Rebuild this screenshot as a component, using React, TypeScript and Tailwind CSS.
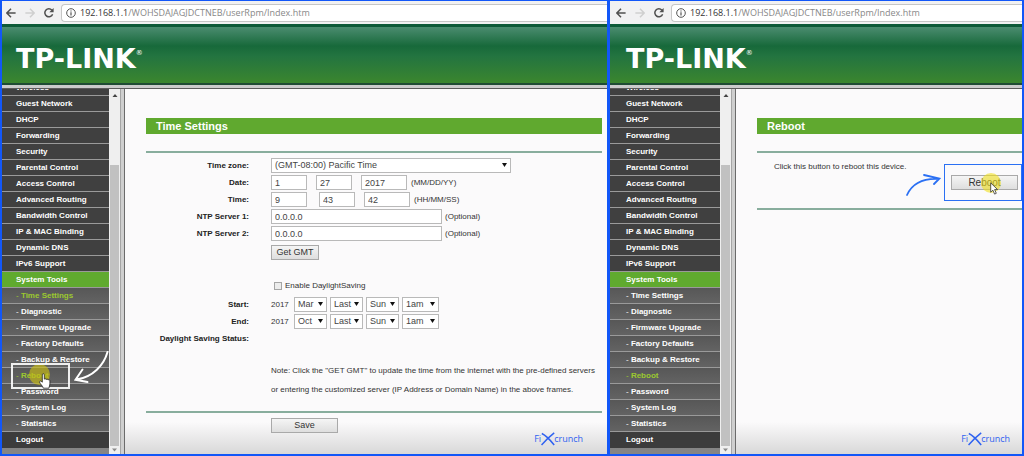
import type { ReactNode } from 'react';

const MENU = [
  'Guest Network',
  'DHCP',
  'Forwarding',
  'Security',
  'Parental Control',
  'Access Control',
  'Advanced Routing',
  'Bandwidth Control',
  'IP & MAC Binding',
  'Dynamic DNS',
  'IPv6 Support',
];

const SYSTEM_TOOLS = [
  'Time Settings',
  'Diagnostic',
  'Firmware Upgrade',
  'Factory Defaults',
  'Backup & Restore',
  'Reboot',
  'Password',
  'System Log',
  'Statistics',
];

function Toolbar({ className }: { className: string }) {
  return (
    <div className={`flex h-[23px] shrink-0 items-center bg-[#f1f1f2] ${className}`}>
      <button aria-label="Back" className="mr-[9px] text-[#505050]">
        <svg viewBox="0 0 10 10" className="block h-2.5 w-2.5" fill="none" stroke="currentColor" strokeWidth="1.5">
          <path d="M9.6 5H1.2M5 .8L.9 5 5 9.2" />
        </svg>
      </button>
      <button aria-label="Forward" className="mr-[9px] text-[#cfcfcf]">
        <svg viewBox="0 0 10 10" className="block h-2.5 w-2.5" fill="none" stroke="currentColor" strokeWidth="1.5">
          <path d="M.4 5h8.400M5 .8L9.100 5 5 9.200" />
        </svg>
      </button>
      <button aria-label="Reload" className="mr-[7px] text-[#505050]">
        <svg viewBox="0 0 10 10" className="block h-2.5 w-2.5" fill="none" stroke="currentColor" strokeWidth="1.5">
          <path d="M8.6 6.2A4 4 0 1 1 7.9 2.2" />
          <path d="M9.6 0v4.3H5.3z" fill="currentColor" stroke="none" />
        </svg>
      </button>
      <div className="flex h-[18px] min-w-0 flex-1 items-center rounded-l-sm border border-r-0 border-[#c6c6c6] bg-white pl-1">
        <svg viewBox="0 0 10 10" className="mr-1 h-2.5 w-2.5 shrink-0" fill="none" stroke="#555" strokeWidth="1">
          <circle cx="5" cy="5" r="4.3" />
          <path d="M5 4.3v3.2M5 2.4v1.1" strokeWidth="1.2" />
        </svg>
        <span className="truncate font-['Open_Sans',sans-serif] text-[9px] text-[#888]">
          <span className="text-[#333]">192.168.1.1</span>/WOHSDAJAGJDCTNEB/userRpm/Index.htm
        </span>
      </div>
    </div>
  );
}

function Banner({ className }: { className: string }) {
  return (
    <>
      <header
        className={`flex h-[61px] shrink-0 items-center border-t-[3px] border-b-2 border-t-[#0d5a38] border-b-[#1f4b34] bg-[linear-gradient(#4b8c70,#17693a_34%,#237440_52%,#3b862e)] ${className}`}
      >
        <span className="flex items-start pt-2 font-['DejaVu_Sans',sans-serif] text-[27px] leading-[26px] font-bold text-white">
          TP-LINK
          <span className="text-[7px] leading-[14px] font-normal">®</span>
        </span>
      </header>
      <div className="h-1 shrink-0 border-b border-[#5c5c5c] bg-[#cbcbcb]" />
    </>
  );
}

function HandCursor() {
  return (
    <svg viewBox="0 0 12 16" className="absolute top-[5px] left-[37px] h-4 w-3" fill="#fff" stroke="#222" strokeWidth=".8">
      <path d="M3.3 9.2V1.8c0-1.5 2-1.5 2 0v4.4c.5-.8 1.8-.6 1.9.4.5-.7 1.8-.5 1.9.4.6-.6 1.8-.3 1.8.8v3.1c0 1.7-.8 2.4-1 4.3H4.3C3.9 13 .9 10.8.6 9.2c-.2-1.1 1-1.5 1.7-.8z" />
    </svg>
  );
}

function RebootHint() {
  return (
    <>
      <span className="absolute -top-1 left-[27px] h-[21px] w-[21px] rounded-full bg-[#c9bd14]/65" />
      <span className="absolute -top-[5px] left-[9px] h-[26px] w-[59px] border-2 border-white/90" />
      <HandCursor />
      <svg viewBox="0 0 36 36" className="absolute -top-5 left-[71px] h-9 w-9" fill="none" stroke="#fff" strokeWidth="2" strokeLinecap="round">
        <path d="M34.5 4C31 17 20 29 3.500 31.500M9.500 21.500L2.500 31.800 14.500 34" />
      </svg>
    </>
  );
}

function Sidebar({ active, className, hint }: { active: string; className: string; hint?: boolean }) {
  const row = `relative block h-4 border-b border-[#9a9a9a] leading-[15px] ${className}`;
  return (
    <nav className="flex shrink-0 text-[8px] font-bold text-white">
      <div className="flex flex-col bg-gradient-to-b from-[#777] to-[#858585]">
        <div className={`flex h-[7px] flex-col justify-end overflow-hidden border-b border-[#9a9a9a] bg-[#404040] leading-[15px] ${className}`}>
          Wireless
        </div>
        <ul>
          {MENU.map((item) => (
            <li key={item}>
              <a href="#" className={`${row} bg-[#404040]`}>{item}</a>
            </li>
          ))}
          <li>
            <a href="#" className={`${row} bg-[#60aa2f]`}>System Tools</a>
          </li>
          {SYSTEM_TOOLS.map((item) => {
            const marked = item === active || (hint && item === 'Reboot');
            return (
              <li key={item} className={item === 'Reboot' ? 'relative z-10' : ''}>
                <a href="#" className={`${row} bg-gradient-to-b from-[#575757] to-[#636363] ${marked ? 'text-[#9cc92f]' : ''}`}>
                  <span className="font-normal">- </span>{item}
                </a>
                {hint && item === 'Reboot' && <RebootHint />}
              </li>
            );
          })}
          <li>
            <a href="#" className={`block h-4 bg-[#3c3c3c] leading-4 ${className}`}>Logout</a>
          </li>
        </ul>
      </div>
      <div className="flex w-[11px] flex-col items-center bg-[#efefef]">
        <svg viewBox="0 0 11 12" className="h-3 w-[11px]" fill="#444">
          <path d="M3.5 8h5L6 5z" />
        </svg>
        <div className="mt-16 w-[9px] flex-1 bg-[#c1c1c1]" />
        <svg viewBox="0 0 11 8" className="h-2 w-[11px]" fill="#8a8a8a">
          <path d="M3 2.5h5L5.5 5.5z" />
        </svg>
      </div>
      <div className="w-[5px] border-r border-l border-r-[#6b6b6b] border-l-[#a5a5a5] bg-[#cfcfcf]" />
    </nav>
  );
}

function Watermark({ className }: { className: string }) {
  return (
    <div className={`absolute flex items-center font-['Open_Sans',sans-serif] text-[9px] leading-3 text-[#2f62f0] ${className}`}>
      Fi
      <svg viewBox="0 0 14 14" className="-mr-px h-3.5 w-3.5" fill="none" stroke="currentColor" strokeWidth="1.5">
        <path d="M.8 1.5C4 3 10 9 13.2 13M13.2.8C9 4 4 9 .5 13" />
      </svg>
      crunch
    </div>
  );
}

interface WindowProps {
  active: string;
  trimmed?: boolean;
  children: ReactNode;
}

function RouterWindow({ active, trimmed, children }: WindowProps) {
  return (
    <section className="flex min-w-0 flex-col overflow-hidden bg-[#fbfafb]">
      <Toolbar className={trimmed ? 'pl-1' : 'pl-1.5'} />
      <Banner className={trimmed ? 'pl-3.5' : 'pl-4'} />
      <div className="flex flex-1">
        <Sidebar active={active} hint={trimmed} className={trimmed ? 'w-[107px] pl-3.5' : 'w-[110px] pl-4'} />
        <main className="relative min-w-0 flex-1 bg-[linear-gradient(to_top,#d8d8d8,#fbfafb_32px)] pt-[29px] pl-[21px] text-[8px] text-[#333]">
          {children}
        </main>
      </div>
    </section>
  );
}

function Title({ children }: { children: ReactNode }) {
  return (
    <h1 className="mb-[17px] h-4 bg-[#60a92f] pl-2.5 text-[11px] leading-4 font-bold text-white">{children}</h1>
  );
}

function Rule() {
  return <hr className="h-0.5 border-0 bg-[#88ad9d]" />;
}

function Row({ label, htmlFor, className = 'h-[17px]', children }: { label?: string; htmlFor?: string; className?: string; children?: ReactNode }) {
  return (
    <div className={`flex items-center ${className}`}>
      <label htmlFor={htmlFor} className="w-[103px] shrink-0 text-right font-bold text-[#222]">{label}</label>
      <div className="flex items-center pl-[22px]">{children}</div>
    </div>
  );
}

function Field({ id, label, value, className }: { id?: string; label?: string; value: string; className: string }) {
  return (
    <input
      id={id}
      aria-label={label}
      defaultValue={value}
      className={`h-[15px] border border-[#b9b9b9] bg-white px-[3px] text-[9px] text-[#444] ${className}`}
    />
  );
}

function Select({ id, label, options, className }: { id?: string; label?: string; options: string[]; className: string }) {
  return (
    <span className={`relative h-[15px] ${className}`}>
      <select
        id={id}
        aria-label={label}
        className="block h-full w-full appearance-none border border-[#b9b9b9] bg-white pl-[3px] text-[9px] leading-[13px] text-[#444]"
      >
        {options.map((o) => <option key={o}>{o}</option>)}
      </select>
      <svg viewBox="0 0 5 4" className="pointer-events-none absolute top-[5px] right-1 h-1 w-[5px]" fill="#111">
        <path d="M0 0h5L2.5 4z" />
      </svg>
    </span>
  );
}

function DstRow({ label, id, month }: { label: string; id: string; month: string }) {
  return (
    <Row label={label} htmlFor={id}>
      <span className="w-[23px]">2017</span>
      <div className="flex gap-[3px]">
        <Select id={id} options={[month]} className="w-[33px]" />
        <Select label={`${label} week`} options={['Last']} className="w-[33px]" />
        <Select label={`${label} day`} options={['Sun']} className="w-[33px]" />
        <Select label={`${label} hour`} options={['1am']} className="w-[37px]" />
      </div>
    </Row>
  );
}

const BUTTON = 'h-[15px] border border-[#a9a9a9] bg-gradient-to-b from-[#f5f5f5] to-[#dedede] text-[#333]';

function TimeSettings() {
  return (
    <div className="pr-[5px]">
      <Title>Time Settings</Title>
      <Rule />
      <form className="pt-1">
        <Row label="Time zone:" htmlFor="tz">
          <Select id="tz" options={['(GMT-08:00) Pacific Time']} className="w-60" />
        </Row>
        <Row label="Date:" htmlFor="month">
          <Field id="month" value="1" className="mr-[9px] w-9" />
          <Field label="Day" value="27" className="mr-[9px] w-9" />
          <Field label="Year" value="2017" className="mr-1 w-[46px]" />
          (MM/DD/YY)
        </Row>
        <Row label="Time:" htmlFor="hour">
          <Field id="hour" value="9" className="mr-3 w-9" />
          <Field label="Minutes" value="43" className="mr-[9px] w-9" />
          <Field label="Seconds" value="42" className="mr-1 w-[46px]" />
          (HH/MM/SS)
        </Row>
        <Row label="NTP Server 1:" htmlFor="ntp1">
          <Field id="ntp1" value="0.0.0.0" className="mr-[3px] w-[171px]" />
          (Optional)
        </Row>
        <Row label="NTP Server 2:" htmlFor="ntp2">
          <Field id="ntp2" value="0.0.0.0" className="mr-[3px] w-[171px]" />
          (Optional)
        </Row>
        <Row className="h-5">
          <button type="button" className={`${BUTTON} w-12 text-[9px] leading-[13px]`}>Get GMT</button>
        </Row>
        <Row className="mt-3.5 h-5">
          <label className="flex items-center gap-[3px] pl-[3px]">
            <input type="checkbox" className="h-2 w-2 appearance-none border border-[#a5a5a5] bg-[#ececec]" />
            Enable DaylightSaving
          </label>
        </Row>
        <DstRow label="Start:" id="dst-start" month="Mar" />
        <DstRow label="End:" id="dst-end" month="Oct" />
        <Row label="Daylight Saving Status:" />
        <p className="mt-3.5 mb-3 pl-[125px] leading-[19px]">
          Note: Click the "GET GMT" to update the time from the internet with the pre-defined servers
          <br />
          or entering the customized server (IP Address or Domain Name) in the above frames.
        </p>
        <Rule />
        <div className="mt-[5px] mb-5 flex pl-[125px]">
          <button type="button" className={`${BUTTON} w-[67px] text-[9px] leading-[13px]`}>Save</button>
        </div>
      </form>
      <Watermark className="right-6 bottom-2" />
    </div>
  );
}

function Reboot() {
  return (
    <>
      <Title>Reboot</Title>
      <Rule />
      <div className="flex items-start justify-between pb-[7px] pl-[17px]">
        <p className="pt-2">Click this button to reboot this device.</p>
        <div className="relative mt-[11px] flex h-[37px] w-[78px] items-center border border-[#2b70f3] pl-1.5">
          <svg viewBox="0 0 36 26" className="absolute top-[7px] right-full mr-1 h-[26px] w-9" fill="none" stroke="#2b70f3" strokeWidth="1.8" strokeLinecap="round">
            <path d="M2 23C7 12 17 6 34 7M19 3L34.5 6.5 29 12" />
          </svg>
          <button type="button" className={`${BUTTON} w-[67px] text-[10px] leading-[13px]`}>Reboot</button>
          <span className="pointer-events-none absolute top-2 left-9 h-5 w-5 rounded-full bg-[#f0e01c]/60" />
          <svg viewBox="0 0 9 13" className="pointer-events-none absolute top-[17px] left-[45px] h-[13px] w-[9px]" fill="#fff" stroke="#333" strokeWidth=".8">
            <path d="M.7.9v9.300l2.200-2 1.700 3.900 1.700-.8-1.700-3.700h3z" />
          </svg>
        </div>
      </div>
      <Rule />
      <Watermark className="right-3 bottom-2" />
    </>
  );
}

export default function App() {
  return (
    <div className="grid min-h-screen grid-cols-[605fr_412fr] gap-[3px] bg-[#1257f8] px-0.5 pt-px pb-0.5 font-['Liberation_Sans',Arial,sans-serif]">
      <RouterWindow active="Time Settings" trimmed>
        <TimeSettings />
      </RouterWindow>
      <RouterWindow active="Reboot">
        <Reboot />
      </RouterWindow>
    </div>
  );
}
